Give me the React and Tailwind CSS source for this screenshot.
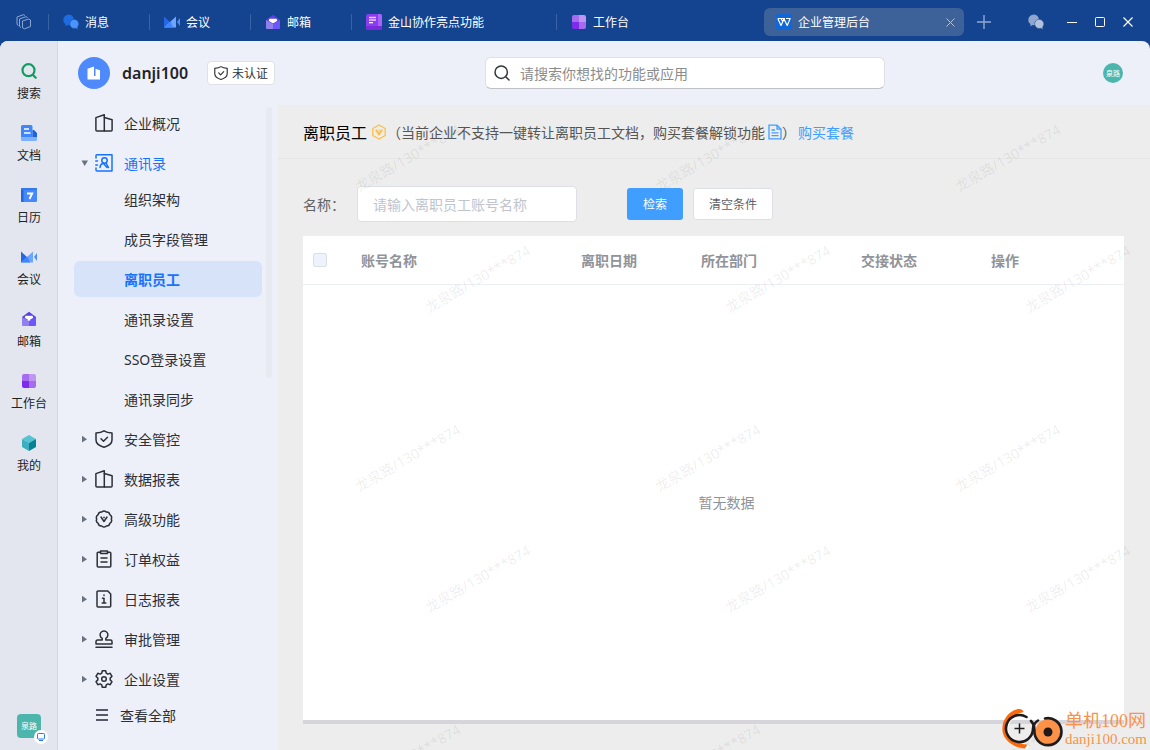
import React from 'react';

/* ---------- coloured app icons ---------- */

const ChatIcon = ({ back = '#1f6be0', front = '#4b93ff', ring = '#14448f' }) => (
  <svg className="size-4 shrink-0" viewBox="0 0 16 16">
    <path d="M6 .5a5.600 5.400 0 0 0-5.700 5.400c0 1.800.9 3.200 2.200 4.100l-.2 2.200 2.300-1.200c.5.100.9.200 1.400.200A5.600 5.400 0 0 0 6 .5z" fill={back} />
    <path d="M11.200 5.300a4.600 4.600 0 1 0 1.700 8.900l2 1.400-.2-2.700A4.600 4.600 0 0 0 11.200 5.300z" fill={front} stroke={ring} strokeWidth=".5" />
  </svg>
);

const MeetingIcon = ({ dark = '#2468e8', light = '#6fa5ff' }) => (
  <svg className="size-4 shrink-0" viewBox="0 0 16 16">
    <path d="M0 2.500 6.500 8.500 0 13.500z" fill={dark} />
    <path d="M0 13.500 12 2.500v11z" fill={light} />
    <path d="M0 13.500 6.500 7.500 9 13.500z" fill="#3f86fb" />
    <path d="M13 8 16 4v8z" fill="#4a8dfc" />
  </svg>
);

const MailIcon = () => (
  <svg className="size-4 shrink-0" viewBox="0 0 16 16">
    <path d="M1 6 8 .8 15 6v3H1z" fill="#5a41e0" />
    <path d="M1 6l7 4v5H2a1 1 0 0 1-1-1z" fill="#8f80ee" />
    <path d="M15 6l-7 4v5h6a1 1 0 0 0 1-1z" fill="#6f56fb" />
    <path d="M4.500 4.800h7l.8 2L8 9.500 3.700 6.800z" fill="#fff" />
  </svg>
);

const GridIcon = () => (
  <svg className="size-4 shrink-0" viewBox="0 0 16 16">
    <path d="M3 1h5v7H1V3a2 2 0 0 1 2-2z" fill="#a66cf0" />
    <path d="M8 1h5a2 2 0 0 1 2 2v5H8z" fill="#be96f2" />
    <path d="M1 8h7v7H3a2 2 0 0 1-2-2z" fill="#7f2bec" />
    <path d="M8 8h7v5a2 2 0 0 1-2 2H8z" fill="#a66cf0" />
  </svg>
);

const NoteIcon = () => (
  <svg className="size-4 shrink-0" viewBox="0 0 16 16">
    <rect width="16" height="16" rx="2" fill="#8d3df0" />
    <path d="M12 0h2a2 2 0 0 1 2 2v10h-4z" fill="#a863fa" />
    <path d="M0 12h16v2a2 2 0 0 1-2 2H2a2 2 0 0 1-2-2z" fill="#7a2bdc" />
    <path d="M3 3.500h7M3 6h7" stroke="#e3cdfb" strokeWidth="1.500" />
    <path d="M3 8.700h4" stroke="#fff" strokeWidth="1.200" />
  </svg>
);

const WpsIcon = () => (
  <svg className="size-4 shrink-0" viewBox="0 0 16 16">
    <rect width="16" height="16" rx="2" fill="#0f67d8" />
    <path d="M1.800 4.500h7.200M10 4.500h4.200l-3 7L8 5M1.800 4.500l3.200 7L8 5M5 4.500l2 3.500" fill="none" stroke="#fff" strokeWidth="1.200" strokeLinejoin="round" />
  </svg>
);

const FindIcon = () => (
  <svg className="size-4 shrink-0" viewBox="0 0 16 16" fill="none" stroke="#0c9f5f" strokeWidth="2.200" strokeLinecap="round">
    <circle cx="7.500" cy="7.200" r="6" />
    <path d="M12 12l2.700 2.700" />
  </svg>
);

const DocIcon = () => (
  <svg className="size-4 shrink-0" viewBox="0 0 16 16">
    <path d="M1.500 0h8.500A1.500 1.500 0 0 1 11.500 1.500V13H0V1.500A1.500 1.500 0 0 1 1.500 0z" fill="#3f86fb" />
    <path d="M11.500 5H13l3 3v5h-4.500z" fill="#1d62dc" />
    <path d="M0 12h16v2.500a1.500 1.500 0 0 1-1.500 1.500h-13A1.500 1.500 0 0 1 0 14.500z" fill="#7db0ff" />
    <path d="M3 4h5M3 8h6.500" stroke="#fff" strokeWidth="1.700" />
  </svg>
);

const CalendarIcon = () => (
  <svg className="size-4 shrink-0" viewBox="0 0 16 16">
    <rect y="1" width="16" height="14" rx="1.200" fill="#4489fb" />
    <path d="M1.200 1H2.500v14H1.200A1.200 1.200 0 0 1 0 13.800V2.200A1.200 1.200 0 0 1 1.200 1z" fill="#1f66e0" />
    <path d="M0 3V2.200A1.200 1.200 0 0 1 1.200 1h13.600A1.200 1.200 0 0 1 16 2.200V3z" fill="#3379ee" />
    <path d="M6 6.500h5.200L8.500 12" fill="none" stroke="#fff" strokeWidth="1.900" />
  </svg>
);

const CubeIcon = () => (
  <svg className="size-4 shrink-0" viewBox="0 0 16 16">
    <path d="M8 0l7 4-7 4-7-4z" fill="#55c3d2" />
    <path d="M1 4l7 4v8l-7-4z" fill="#3aafc1" />
    <path d="M15 4L8 8v8l7-4z" fill="#078294" />
  </svg>
);

/* ---------- line icons of the admin menu ---------- */

const Line = ({ children, size = 'size-[18px]' }) => (
  <svg className={`${size} shrink-0`} viewBox="0 0 18 18" fill="none" stroke="currentColor" strokeWidth="1.500" strokeLinejoin="round" strokeLinecap="round">
    {children}
  </svg>
);

const BuildingIcon = () => (
  <Line>
    <path d="M9.300 17H1.900a1 1 0 0 1-1-1V3.600L9.300.8z" />
    <path d="M9.300 3.500l7.800 2.200V16a1 1 0 0 1-1 1H9.300" />
  </Line>
);

const ContactsIcon = () => (
  <Line>
    <path d="M1 4V1.800A1 1 0 0 1 2 .8h15v16.200H2a1 1 0 0 1-1-1V14M.8 7h1.700M.8 11h1.700" />
    <circle cx="9.500" cy="6.500" r="2.700" />
    <path d="M5 13.500a4.700 4.700 0 0 1 3.200-4.200M11 9l2.500 4.500M8.500 9.500l3.500 4" />
  </Line>
);

const ShieldIcon = ({ size }) => (
  <Line size={size}>
    <path d="M9 .8c2.300 1.500 5 2 8 2.200v7c0 3.500-3.500 6-8 7.300C4.500 16 1 13.500 1 10V3c3-.2 5.700-.7 8-2.200z" />
    <path d="M6 8.800l2.500 2.500L12.500 7.300" />
  </Line>
);

const AdvancedIcon = () => (
  <Line>
    <path d="M6.800 2Q9-.2 11.200 2q3-.4 3.600 2.600 2.700 1.600 1.500 4.400 1.200 2.800-1.500 4.400-.6 3-3.600 2.600Q9 18.200 6.800 16q-3 .4-3.600-2.600Q.5 11.800 1.700 9 .5 6.200 3.200 4.600 3.800 1.600 6.800 2z" />
    <path d="M6 7l3 4.500L12 7" />
    <path d="M9 7.200v.6" />
  </Line>
);

const OrderIcon = () => (
  <Line>
    <path d="M5.500 2.200H3.200a1 1 0 0 0-1 1V16a1 1 0 0 0 1 1h11.600a1 1 0 0 0 1-1V3.200a1 1 0 0 0-1-1h-2.300" />
    <path d="M5.500 1h7v2.600h-7zM6 8h6M6 12h6" />
  </Line>
);

const LogIcon = () => (
  <Line>
    <path d="M3 .9h9.800l2.900 3V16a1 1 0 0 1-1 1H3a1 1 0 0 1-1-1V1.900a1 1 0 0 1 1-1z" />
    <path d="M7.500 8.300H9V13M7.200 13h3.600M9 5v.5" />
  </Line>
);

const StampIcon = () => (
  <Line>
    <path d="M7.200 10V8.300A3.900 3.900 0 1 1 10.800 8.300V10h4.700a1.500 1.500 0 0 1 1.500 1.500v2.500H1v-2.500A1.500 1.500 0 0 1 2.500 10zM1 17.200h16" />
  </Line>
);

const GearIcon = () => (
  <Line>
    <path d="M7.300.8h3.400l.6 2.400 1.500.9 2.400-.8 1.800 3-1.800 1.800v1.800l1.800 1.800-1.800 3-2.400-.8-1.500.9-.6 2.400H7.300l-.6-2.400-1.500-.9-2.400.8-1.800-3 1.800-1.800V8.100L1 6.300l1.800-3 2.400.8 1.500-.9z" />
    <circle cx="9" cy="9" r="2.300" />
  </Line>
);

const VipIcon = () => (
  <svg className="size-4 shrink-0" viewBox="0 0 16 16" fill="none" stroke="#fbbf45" strokeLinejoin="round">
    <path d="M8 1l6.200 3.500v7L8 15l-6.200-3.500v-7z" strokeWidth="1.300" />
    <path d="M5 5.800 8 10.500l3-4.700" strokeWidth="1.900" />
    <path d="M8 5.500v2" strokeWidth="1" />
  </svg>
);

const FileIcon = () => (
  <svg className="h-4 w-[14px] shrink-0" viewBox="0 0 14 16" fill="none" stroke="#409eff" strokeWidth="1.300">
    <path d="M1 1.200h8l4 4v9.600H1zM9 1.200v4h4M3.500 6h3.500M3.500 8.800h7M3.500 11.600h7" />
  </svg>
);

/* ---------- data ---------- */

const tabs = [
  { label: '消息', icon: <ChatIcon />, width: 'w-[101px]' },
  { label: '会议', icon: <MeetingIcon />, width: 'w-[101px]' },
  { label: '邮箱', icon: <MailIcon />, width: 'w-[101px]' },
  { label: '金山协作亮点功能', icon: <NoteIcon />, width: 'w-[205px]' },
  { label: '工作台', icon: <GridIcon />, width: 'w-[205px]' },
];

const railItems = [
  { label: '搜索', icon: <FindIcon /> },
  { label: '文档', icon: <DocIcon /> },
  { label: '日历', icon: <CalendarIcon /> },
  { label: '会议', icon: <MeetingIcon /> },
  { label: '邮箱', icon: <MailIcon /> },
  { label: '工作台', icon: <GridIcon /> },
  { label: '我的', icon: <CubeIcon /> },
];

const contactItems = [
  { label: '组织架构' },
  { label: '成员字段管理' },
  { label: '离职员工', active: true },
  { label: '通讯录设置' },
  { prefix: 'SSO', label: '登录设置' },
  { label: '通讯录同步' },
];

const menuItems = [
  { label: '安全管控', icon: <ShieldIcon /> },
  { label: '数据报表', icon: <BuildingIcon /> },
  { label: '高级功能', icon: <AdvancedIcon /> },
  { label: '订单权益', icon: <OrderIcon /> },
  { label: '日志报表', icon: <LogIcon /> },
  { label: '审批管理', icon: <StampIcon /> },
  { label: '企业设置', icon: <GearIcon /> },
];

const columns = [
  { label: '账号名称', width: 'w-[220px]' },
  { label: '离职日期', width: 'w-[120px]' },
  { label: '所在部门', width: 'w-[160px]' },
  { label: '交接状态', width: 'w-[130px]' },
  { label: '操作', width: '' },
];

/* ---------- page parts ---------- */

function TitleBar() {
  return (
    <header className="flex h-[41px] shrink-0 items-center pt-[3px] text-xs text-white">
      <button className="flex w-12 justify-center" aria-label="窗口">
        <svg className="size-4" viewBox="0 0 16 16" fill="none" stroke="#8ea6cf" strokeLinejoin="round">
          <path d="M2.500 11.500 1 10.500V3l6.500-2.300L9 1.500M5 13.500l-1.500-1V5L10 2.700l1.500.8" />
          <path d="M6.500 7l6-2 2 1v6.500l-6 2.300-2-1z" />
        </svg>
      </button>
      {tabs.map((tab) => (
        <button key={tab.label} className={`flex h-4 items-center gap-[6px] border-l border-[#3a63a3] pl-[14px] ${tab.width}`}>
          {tab.icon}
          <span className="whitespace-nowrap">{tab.label}</span>
        </button>
      ))}
      <div className="ml-auto flex items-center">
        <div className="flex h-7 w-[200px] items-center rounded-md bg-[#3d6199] pr-[9px] pl-3">
          <WpsIcon />
          <span className="ml-[6px] flex-1">企业管理后台</span>
          <button aria-label="关闭标签">
            <svg className="size-[9px]" viewBox="0 0 9 9" stroke="#b4c3dc">
              <path d="M.5.5l8 8M8.500.5l-8 8" />
            </svg>
          </button>
        </div>
        <button className="ml-[13px]" aria-label="新建标签">
          <svg className="size-[14px]" viewBox="0 0 14 14" stroke="#91a9d0" strokeWidth="1.400">
            <path d="M7 0v14M0 7h14" />
          </svg>
        </button>
        <button className="ml-[37px]" aria-label="聊天">
          <ChatIcon back="#8fa7cf" front="#b3c3de" />
        </button>
        <div className="mr-[17px] ml-[23px] flex items-center gap-[18px]">
          <button aria-label="最小化">
            <svg className="size-[10px]" viewBox="0 0 10 10" stroke="#fff"><path d="M0 5.500h10" /></svg>
          </button>
          <button aria-label="最大化">
            <svg className="size-[10px]" viewBox="0 0 10 10" fill="none" stroke="#fff"><rect x=".5" y=".5" width="9" height="9" rx="1" /></svg>
          </button>
          <button aria-label="关闭">
            <svg className="size-[10px]" viewBox="0 0 10 10" stroke="#fff" strokeWidth="1.200"><path d="M.5.5l9 9M9.500.5l-9 9" /></svg>
          </button>
        </div>
      </div>
    </header>
  );
}

function Rail() {
  return (
    <nav className="flex w-[58px] shrink-0 flex-col items-center gap-6 border-r border-[#d4d7de] bg-[#e3e6ee] pt-[22px] pl-px text-xs text-[#222]">
      {railItems.map((item) => (
        <button key={item.label} className="flex flex-col items-center gap-[6px]">
          {item.icon}
          <span>{item.label}</span>
        </button>
      ))}
      <div className="relative mt-auto mb-3 flex size-6 items-center justify-center rounded bg-[#4db6ac] text-[8px] text-white">
        泉路
        <span className="absolute -right-[7px] -bottom-[6px] flex size-[14px] items-center justify-center rounded-full bg-white">
          <svg className="size-2" viewBox="0 0 8 8" fill="none" stroke="#2b7bf5">
            <rect x=".5" y=".5" width="7" height="5.500" rx=".8" />
            <path d="M2 7.500h4" />
          </svg>
        </span>
      </div>
    </nav>
  );
}

function Arrow({ open }) {
  return (
    <svg className="size-2 shrink-0" viewBox="0 0 8 8" fill="#6b7180">
      {open ? <path d="M.5 1.500h6.500L3.700 7z" /> : <path d="M1 .8v6.800l5-3.400z" />}
    </svg>
  );
}

function MenuRow({ icon, label, arrow, open }) {
  return (
    <button className={`flex h-9 w-full items-center pl-[7px] ${open ? 'text-[#1673ff]' : 'text-[#2c2f36]'}`}>
      <span className="mr-[6px] w-2">{arrow && <Arrow open={open} />}</span>
      {icon}
      <span className="ml-[11px]">{label}</span>
    </button>
  );
}

function Sidebar() {
  return (
    <aside className="flex w-[220px] shrink-0 justify-between pr-[6px] pl-4 text-sm">
      <div className="flex w-[188px] flex-col">
        <div className="flex flex-col gap-1">
          <MenuRow icon={<BuildingIcon />} label="企业概况" />
          <MenuRow icon={<ContactsIcon />} label="通讯录" arrow open />
        </div>
        <div className="mb-1 flex flex-col gap-1">
          {contactItems.map((item) => (
            <button
              key={item.label}
              className={`flex h-9 items-center rounded-md pl-[50px] ${
                item.active ? 'bg-[#d7e3f9] font-bold text-[#1673ff]' : 'text-[#2c2f36]'
              }`}
            >
              <span>
                {item.prefix && <span className="font-['Noto_Sans',sans-serif]">{item.prefix}</span>}
                {item.label}
              </span>
            </button>
          ))}
        </div>
        <div className="flex flex-col gap-1">
          {menuItems.map((item) => (
            <MenuRow key={item.label} icon={item.icon} label={item.label} arrow />
          ))}
        </div>
        <button className="flex h-9 items-center gap-3 pl-[22px] text-[#2c2f36]">
          <svg className="size-3" viewBox="0 0 12 12" stroke="#555a66" strokeWidth="2">
            <path d="M0 1h12M0 6h12M0 11h12" />
          </svg>
          查看全部
        </button>
      </div>
      <div className="mt-[2px] h-[271px] w-[6px] rounded-full bg-[#e7eaf1]" />
    </aside>
  );
}

function PageHeader() {
  return (
    <div className="flex h-16 shrink-0 items-center">
      <div className="flex w-[220px] shrink-0 items-center pl-5">
        <span className="flex size-8 shrink-0 items-center justify-center rounded-full bg-[#4f8afd]">
          <svg className="size-[14px]" viewBox="0 0 14 14" fill="#fff">
            <path d="M.5 2.800 7 .5V10h1.500V2.800l4.500 1.400V13a.5.500 0 0 1-.5.500H1a.5.500 0 0 1-.5-.5z" />
          </svg>
        </span>
        <strong className="ml-3 w-[65px] font-['Noto_Sans',sans-serif] text-base font-semibold whitespace-nowrap text-[#1f2329]">danji100</strong>
        <span className="ml-5 flex h-6 shrink-0 items-center gap-1 rounded border border-[#dfe1e6] bg-white px-[6px] text-xs text-[#333]">
          <ShieldIcon size="size-[14px]" />
          未认证
        </span>
      </div>
      <div className="flex flex-1 justify-center">
        <label className="flex h-8 w-[400px] items-center rounded-md border border-[#dfe0e4] border-b-[#bfc1c6] bg-white px-2">
          <svg className="size-4 shrink-0" viewBox="0 0 16 16" fill="none" stroke="#33363b" strokeWidth="1.500" strokeLinecap="round">
            <circle cx="7.200" cy="7.200" r="6.200" />
            <path d="M12 12l3 3" />
          </svg>
          <input
            type="search"
            aria-label="搜索功能或应用"
            placeholder="请搜索你想找的功能或应用"
            className="ml-[10px] flex-1 bg-transparent text-sm outline-none placeholder:text-[#8c8c8c]"
          />
        </label>
      </div>
      <div className="w-[58px] shrink-0 pl-[11px]">
        <span className="flex size-5 items-center justify-center rounded-full bg-[#4db6ac] text-[7px] text-white">泉路</span>
      </div>
    </div>
  );
}

// two staggered marks in every 300x300 tile, as many tiles as the window holds
function Watermark() {
  const cols = Math.ceil(window.innerWidth / 300) - 1;
  const rows = Math.ceil(window.innerHeight / 300);
  const marks = [];
  for (let row = 0; row < rows; row++) {
    for (let col = 0; col < cols; col++) {
      marks.push({ left: 130 + col * 300, top: 53 + row * 300 });
      marks.push({ left: 200 + col * 300, top: 174 + row * 300 });
    }
  }
  return (
    <div className="pointer-events-none absolute inset-0 overflow-hidden" aria-hidden="true">
      {marks.filter((mark) => mark.top < window.innerHeight - 60).map((mark) => (
        <span
          key={`${mark.left}-${mark.top}`}
          className="absolute -translate-x-1/2 -translate-y-1/2 -rotate-30 font-['Noto_Sans','Noto_Sans_CJK_SC',sans-serif] text-sm whitespace-nowrap text-black/8"
          style={mark}
        >
          龙泉路/130***874
        </span>
      ))}
    </div>
  );
}

function Resigned() {
  return (
    <main className="relative flex min-w-0 flex-1 flex-col bg-[#ededed] text-sm text-[#606266]">
      <div className="flex h-[54px] shrink-0 items-center border-b border-[#e6e6e6] pl-[25px] whitespace-nowrap text-[#555]">
        <h1 className="mr-1 text-base text-black">离职员工</h1>
        <VipIcon />
        <span>（当前企业不支持一键转让离职员工文档，购买套餐解锁功能</span>
        <span className="ml-[3px]"><FileIcon /></span>
        <span>）</span>
        <a href="#buy" className="ml-[2px] text-[#409eff]">购买套餐</a>
      </div>
      <form className="flex shrink-0 items-center pt-[27px] pb-[14px] pl-[25px]">
        <label htmlFor="member" className="w-[54px]">名称：</label>
        <input
          id="member"
          placeholder="请输入离职员工账号名称"
          className="h-9 w-[220px] rounded border border-[#dcdfe6] bg-white px-[15px] outline-none placeholder:text-[#c0c4cc]"
        />
        <button type="button" className="ml-[50px] h-8 w-14 rounded-[3px] bg-[#409eff] text-xs text-white">检索</button>
        <button type="button" className="ml-[10px] h-8 w-20 rounded-[3px] border border-[#dcdfe6] bg-white text-xs">清空条件</button>
      </form>
      <div className="mr-[26px] mb-[26px] ml-[25px] flex flex-1 flex-col bg-white text-[#909399]">
        <table className="w-full table-fixed">
          <thead>
            <tr className="h-12 border-b border-[#ebeef5] text-left">
              <th className="w-12 pl-[10px]">
                <input
                  type="checkbox"
                  disabled
                  aria-label="全选"
                  className="block size-[14px] appearance-none rounded-xs border border-[#dcdfe6] bg-[#edf2fc]"
                />
              </th>
              {columns.map((col) => (
                <th key={col.label} className={`px-[10px] font-bold ${col.width}`}>{col.label}</th>
              ))}
            </tr>
          </thead>
        </table>
        <p className="flex flex-1 items-center justify-center pl-[26px]">暂无数据</p>
        <div className="h-1 bg-[#d5d5db]" />
      </div>
      <Watermark />
    </main>
  );
}

function SiteMark() {
  return (
    <div className="pointer-events-none absolute right-[3px] bottom-0 flex items-center gap-[2px] text-[#fb9248]">
      <svg className="h-[42px] w-[61px]" viewBox="0 0 61 42" fill="none" strokeLinecap="round">
        <path d="M20.500 3.500C11 6 4 12 3.500 21c0 8 6 15 20.500 17.500" stroke="#fff" strokeWidth="5" />
        <path d="M21.500 4C11 6.500 5 12.500 4.500 21c.2 8.500 8 15 21 15.500l-2.500 4C11 39.500 .5 32 .3 21 .5 10 8 3 14.500 1.500 18 .5 21 1.500 21.500 4z" fill="#fa6a0a" />
        <path d="M24.500 9A13.500 13.500 0 1 0 31 20.500c.5-4 2.500-6.500 5-8" stroke="#1f1a1c" strokeWidth="2.600" />
        <circle cx="46" cy="23.700" r="12.500" fill="#fb9248" />
        <path d="M43 10.500A13.500 13.500 0 1 1 32.500 22.500c0-3-1-7-3.500-9.500" stroke="#1f1a1c" strokeWidth="2.600" />
        <circle cx="46" cy="24" r="4.500" fill="#1f1a1c" />
        <path d="M17.500 15.500v10M12.500 20.500h10" stroke="#1f1a1c" strokeWidth="1.500" strokeLinecap="butt" />
      </svg>
      <div className="font-['Liberation_Serif','Noto_Sans_CJK_SC',serif] whitespace-nowrap">
        <div className="text-lg leading-5">单机100网</div>
        <div className="text-[15px] leading-4">danji100.com</div>
      </div>
    </div>
  );
}

export default function App() {
  return (
    <div className="relative flex h-screen flex-col overflow-hidden bg-[#14448f] font-['Noto_Sans_CJK_SC','Noto_Sans',sans-serif]">
      <TitleBar />
      <div className="flex min-h-0 flex-1 overflow-hidden rounded-t-lg bg-[#edf0f8]">
        <Rail />
        <div className="flex min-w-0 flex-1 flex-col">
          <PageHeader />
          <div className="flex min-h-0 flex-1">
            <Sidebar />
            <Resigned />
          </div>
        </div>
      </div>
      <SiteMark />
    </div>
  );
}
